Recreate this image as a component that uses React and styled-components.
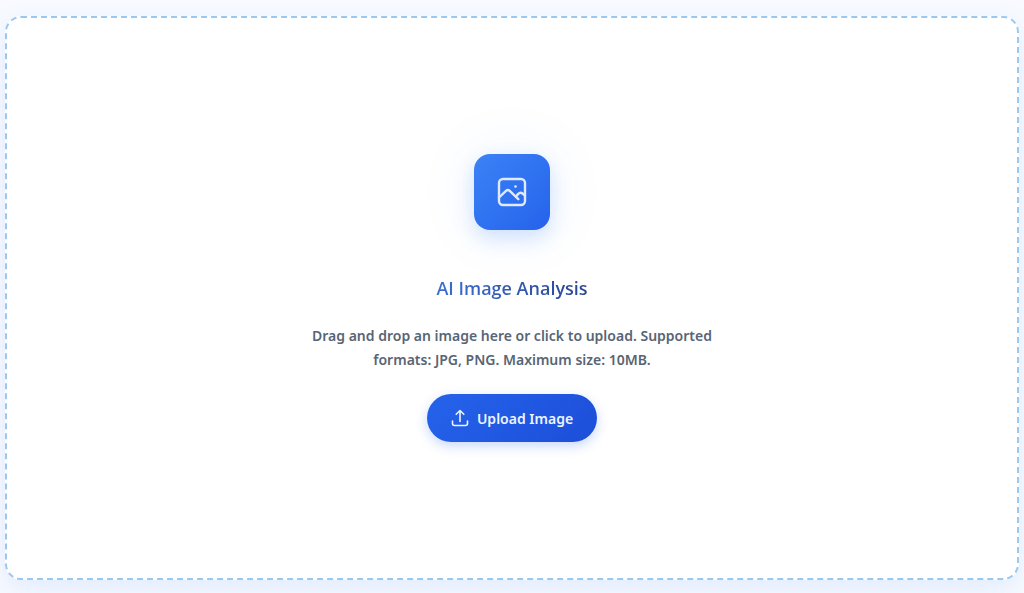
import React from 'react';
import styled, { createGlobalStyle } from 'styled-components';

const GlobalStyle = createGlobalStyle`
  * {
    box-sizing: border-box;
  }
  body {
    margin: 0;
    background: #f8faff;
    font-family: 'Segoe UI', 'Noto Sans', sans-serif;
  }
`;

const Page = styled.main`
  display: flex;
  min-height: 100vh;
  padding: 16px 5px 13px;
  overflow: hidden;
`;

const DropZone = styled.section`
  flex: 1;
  display: flex;
  flex-direction: column;
  align-items: center;
  justify-content: center;
  padding: 32px;
  background: #fff;
  border: 2px dashed #9ac8ee;
  border-radius: 16px;
  box-shadow: 0 8px 24px rgba(59, 130, 246, 0.12);
`;

const IconTile = styled.div`
  display: flex;
  align-items: center;
  justify-content: center;
  width: 76px;
  height: 76px;
  margin-bottom: 44px;
  border-radius: 16px;
  color: #dfeaff;
  background: linear-gradient(135deg, #3b82f6, #2563eb);
  box-shadow:
    0 8px 20px rgba(59, 130, 246, 0.22),
    0 0 60px rgba(59, 130, 246, 0.09);
`;

const Title = styled.h1`
  margin: 0 0 22px;
  font-family: 'Segoe UI', 'Open Sans', sans-serif;
  font-size: 18px;
  font-weight: 600;
  line-height: 28px;
  color: transparent;
  background: linear-gradient(90deg, #3b6fd0, #2b4594);
  background-clip: text;
`;

const Description = styled.p`
  max-width: 420px;
  margin: 0 0 22px;
  font-size: 14px;
  font-weight: 600;
  line-height: 24px;
  text-align: center;
  color: #586575;
`;

const UploadButton = styled.button`
  display: inline-flex;
  align-items: center;
  gap: 8px;
  height: 48px;
  padding: 0 24px;
  border: 0;
  border-radius: 24px;
  font-family: inherit;
  font-size: 14px;
  font-weight: 600;
  color: #eef4ff;
  background: linear-gradient(135deg, #2563eb, #1d4ed8);
  box-shadow: 0 4px 12px rgba(37, 99, 235, 0.25);
  cursor: pointer;
`;

const ImageIcon = () => (
  <svg
    width="30"
    height="30"
    viewBox="0 0 30 30"
    fill="none"
    stroke="currentColor"
    strokeWidth="2.4"
    strokeLinecap="round"
    strokeLinejoin="round"
    aria-hidden="true"
  >
    <rect x="2" y="2" width="26" height="26" rx="4" />
    <path d="M2 20.5l7-6.6a2.7 2.7 0 0 1 3.7 0l8.6 8.3" />
    <path d="M19 19.5l2.2-2.6a3.4 3.4 0 0 1 4.4-.4L28 18.5" />
    <circle cx="18.5" cy="9.5" r="1.3" fill="currentColor" stroke="none" />
  </svg>
);

const UploadIcon = () => (
  <svg
    width="18"
    height="18"
    viewBox="0 0 18 18"
    fill="none"
    stroke="currentColor"
    strokeWidth="1.6"
    strokeLinecap="round"
    strokeLinejoin="round"
    aria-hidden="true"
  >
    <path d="M1.5 12v2.5a2 2 0 0 0 2 2h11a2 2 0 0 0 2-2V12" />
    <path d="M5.2 5.3L9 1.5l3.8 3.8M9 1.5v11" />
  </svg>
);

const App = () => (
  <>
    <GlobalStyle />
    <Page>
      <DropZone>
        <IconTile>
          <ImageIcon />
        </IconTile>
        <Title>AI Image Analysis</Title>
        <Description>
          Drag and drop an image here or click to upload. Supported formats: JPG, PNG. Maximum
          size: 10MB.
        </Description>
        <UploadButton type="button">
          <UploadIcon />
          Upload Image
        </UploadButton>
      </DropZone>
    </Page>
  </>
);

export default App;
